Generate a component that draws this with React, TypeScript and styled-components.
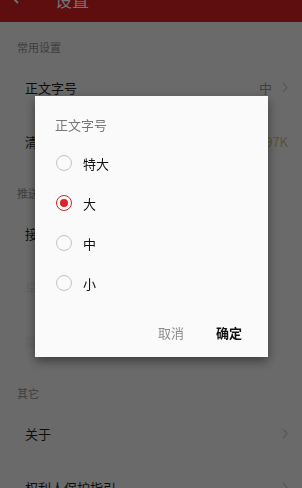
import { FC, useState } from "react";
import styled, { createGlobalStyle } from "styled-components";

const GlobalStyle = createGlobalStyle`
  html, body {
    margin: 0;
    padding: 0;
    background: #ebebeb;
    font-family: "Noto Sans CJK SC", "Noto Sans", sans-serif;
    -webkit-font-smoothing: antialiased;
  }
`;

type Row = { label: string; value?: string; arrow?: boolean; disabled?: boolean; accent?: boolean };
type Section = { title: string; rows: Row[] };

const sections: Section[] = [
  {
    title: "常用设置",
    rows: [
      { label: "正文字号", value: "中", arrow: true },
      { label: "清除缓存", value: "97K", accent: true },
    ],
  },
  {
    title: "推送设置",
    rows: [
      { label: "接收推送通知" },
      { label: "早晚报推送", disabled: true },
      { label: "同步到通知栏", disabled: true },
    ],
  },
  {
    title: "其它",
    rows: [
      { label: "关于", arrow: true },
      { label: "权利人保护指引", arrow: true },
    ],
  },
];

const sizes = ["特大", "大", "中", "小"];

const Chevron: FC = () => (
  <svg width="6" height="11" viewBox="0 0 6 11" fill="none">
    <path d="M1 1l4 4.5L1 10" stroke="#b5b5b5" strokeWidth="1.1" />
  </svg>
);

const App: FC = () => {
  const [size, setSize] = useState("大");

  return (
    <>
      <GlobalStyle />
      <Page>
        <Header>
          <BackIcon viewBox="0 0 20 20" width="20" height="20">
            <path d="M17 10H4M9 4l-6 6 6 6" stroke="#fff" strokeWidth="1.8" fill="none" />
          </BackIcon>
          <HeaderTitle>设置</HeaderTitle>
        </Header>
        {sections.map((s) => (
          <div key={s.title}>
            <SectionTitle>{s.title}</SectionTitle>
            {s.rows.map((r) => (
              <SettingRow key={r.label}>
                <RowLabel $disabled={r.disabled}>{r.label}</RowLabel>
                <RowRight>
                  {r.value && <RowValue $accent={r.accent}>{r.value}</RowValue>}
                  {r.arrow && <Chevron />}
                </RowRight>
              </SettingRow>
            ))}
          </div>
        ))}
      </Page>

      <Overlay>
        <Dialog>
          <DialogTitle>正文字号</DialogTitle>
          <Options>
            {sizes.map((s) => (
              <Option key={s} onClick={() => setSize(s)}>
                <Radio $checked={size === s} />
                <OptionLabel>{s}</OptionLabel>
              </Option>
            ))}
          </Options>
          <Actions>
            <ActionButton>取消</ActionButton>
            <ActionButton $primary>确定</ActionButton>
          </Actions>
        </Dialog>
      </Overlay>
    </>
  );
};

const Page = styled.div`
  height: 488px;
  overflow: hidden;
  background: #ebebeb;
`;

const Header = styled.div`
  height: 22px;
  background: #d11f1f;
  display: flex;
  align-items: flex-end;
  overflow: hidden;
  padding-left: 9px;
  box-sizing: border-box;
`;

const BackIcon = styled.svg`
  margin-bottom: 15px;
  flex-shrink: 0;
`;

const HeaderTitle = styled.div`
  color: #fff;
  font-size: 17px;
  line-height: 20px;
  margin: 0 0 12px 26px;
`;

const SectionTitle = styled.div`
  padding: 18px 17px 6px;
  font-size: 11px;
  line-height: 14px;
  color: #8a8a8a;
`;

const SettingRow = styled.div`
  height: 54px;
  display: flex;
  align-items: center;
  justify-content: space-between;
  padding: 0 14px 0 25px;
`;

const RowLabel = styled.span<{ $disabled?: boolean }>`
  font-size: 13px;
  color: ${(p) => (p.$disabled ? "#dadada" : "#1e1e1e")};
`;

const RowRight = styled.div`
  display: flex;
  align-items: center;
  gap: 10px;
`;

const RowValue = styled.span<{ $accent?: boolean }>`
  font-size: 13px;
  color: ${(p) => (p.$accent ? "#c9b07c" : "#8e8e8e")};
`;

const Overlay = styled.div`
  position: fixed;
  inset: 0;
  background: rgba(0, 0, 0, 0.55);
`;

const Dialog = styled.div`
  width: 233px;
  height: 261px;
  margin: 96px 0 0 35px;
  background: #fafafa;
  box-shadow: 0 4px 10px rgba(0, 0, 0, 0.45);
  box-sizing: border-box;
  padding-top: 20px;
  display: flex;
  flex-direction: column;
`;

const DialogTitle = styled.div`
  padding-left: 20px;
  font-size: 13px;
  line-height: 18px;
  color: #777;
`;

const Options = styled.div`
  margin-top: 9px;
  display: flex;
  flex-direction: column;
`;

const Option = styled.div`
  height: 40px;
  display: flex;
  align-items: center;
  padding-left: 21px;
  cursor: pointer;
`;

const Radio = styled.span<{ $checked: boolean }>`
  width: 16px;
  height: 16px;
  box-sizing: border-box;
  border-radius: 50%;
  border: 1.6px solid ${(p) => (p.$checked ? "#c62828" : "#c4c4c4")};
  display: flex;
  align-items: center;
  justify-content: center;

  &::after {
    content: "";
    width: 8px;
    height: 8px;
    border-radius: 50%;
    background: ${(p) => (p.$checked ? "#dd2424" : "transparent")};
  }
`;

const OptionLabel = styled.span`
  margin-left: 11px;
  font-size: 13px;
  color: #111;
`;

const Actions = styled.div`
  margin-top: 15px;
  height: 28px;
  display: flex;
  align-items: center;
  justify-content: flex-end;
  gap: 32px;
  padding-right: 26px;
`;

const ActionButton = styled.span<{ $primary?: boolean }>`
  font-size: 13px;
  color: ${(p) => (p.$primary ? "#111" : "#8c8c8c")};
  font-weight: ${(p) => (p.$primary ? 700 : 400)};
`;

export default App;
